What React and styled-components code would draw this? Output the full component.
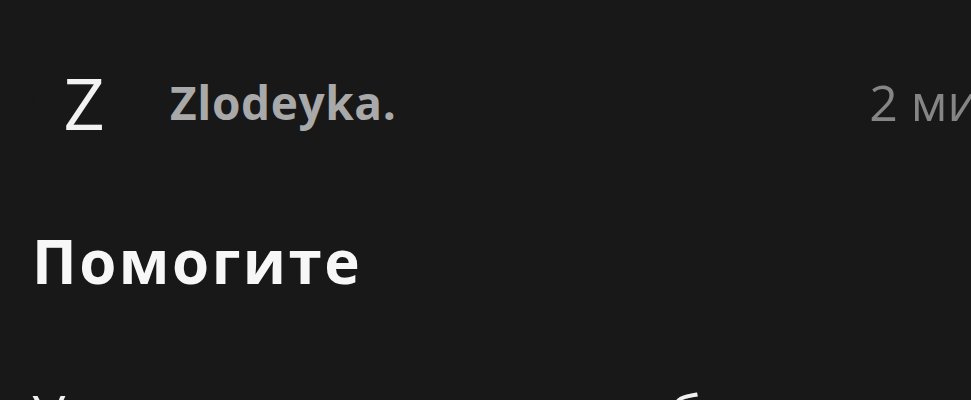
import React from "react";
import styled, { createGlobalStyle } from "styled-components";

const GlobalStyle = createGlobalStyle`
  html, body {
    margin: 0;
    padding: 0;
    background: #181818;
    overflow: hidden;
  }
  body {
    font-family: "Open Sans", "Noto Sans", sans-serif;
  }
`;

const Post = styled.article`
  width: 100%;
  height: 100vh;
  box-sizing: border-box;
  padding: 46px 0 0 32px;
  background: #181818;
  color: #f5f5f5;
  overflow: hidden;
`;

const Header = styled.div`
  display: flex;
  align-items: center;
  height: 112px;
  white-space: nowrap;
`;

const Avatar = styled.div`
  width: 104px;
  height: 104px;
  border-radius: 50%;
  background: #181818;
  display: flex;
  align-items: center;
  justify-content: center;
  font-size: 72px;
  font-weight: 400;
  color: #f2f2f2;
  flex-shrink: 0;
`;

const Author = styled.span`
  margin-left: 34px;
  font-size: 46px;
  font-weight: 700;
  color: #a9a9a9;
  letter-spacing: 0.6px;
`;

/* the timestamp runs off the right edge, only "2 ми" stays in view */
const Time = styled.span`
  margin-left: auto;
  margin-right: -280px;
  font-size: 50px;
  font-weight: 400;
  color: #858585;
`;

const Title = styled.h1`
  margin: 67px 0 0;
  font-size: 60px;
  font-weight: 700;
  line-height: 1.2;
  letter-spacing: 2.5px;
  color: #f7f7f7;
`;

const Body = styled.p`
  margin: 80px 0 0;
  font-size: 54px;
  line-height: 1.4;
  letter-spacing: 4.3px;
  white-space: nowrap;
  color: #f0f0f0;
`;

export default function App() {
  return (
    <>
      <GlobalStyle />
      <Post>
        <Header>
          <Avatar>Z</Avatar>
          <Author>Zlodeyka.</Author>
          <Time>2 минуты назад</Time>
        </Header>
        <Title>Помогите</Title>
        <Body>У меня возникла проблема с телефоном</Body>
      </Post>
    </>
  );
}
